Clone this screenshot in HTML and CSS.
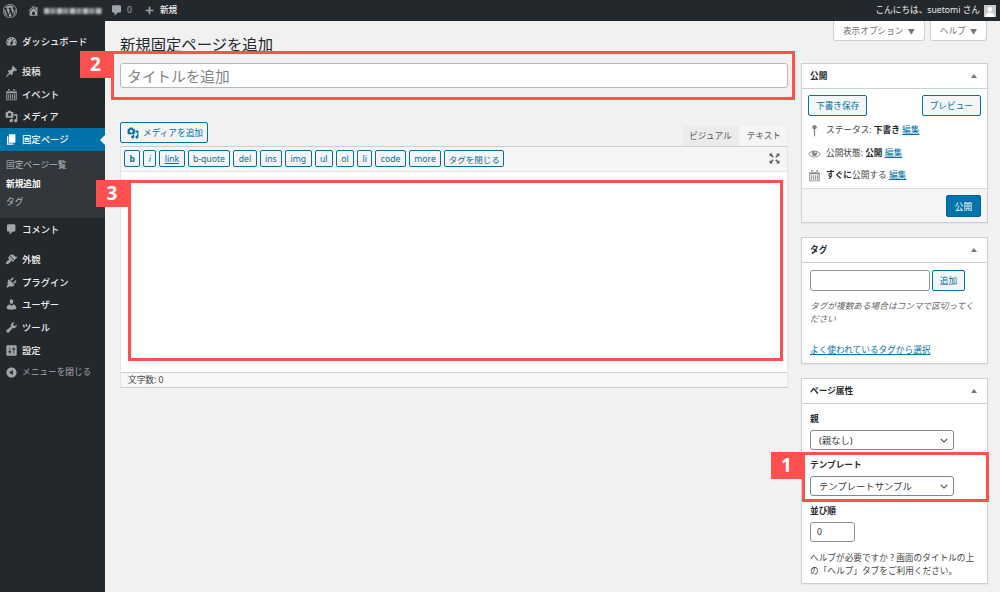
FILE: index.html
```html
<!DOCTYPE html>
<html lang="ja">
<head>
<meta charset="utf-8">
<title>新規固定ページを追加</title>
<link rel="stylesheet" href="styles.css">
</head>
<body>
<header class="topbar">
  <div class="tb-left">
    <svg class="tb-logo" viewBox="0 0 20 20"><path d="M20 10c0-5.52-4.48-10-10-10S0 4.48 0 10s4.48 10 10 10 10-4.48 10-10zM10 1.01c4.97 0 8.99 4.02 8.99 8.99s-4.02 8.99-8.99 8.99S1.01 14.97 1.01 10 5.03 1.01 10 1.01zM8.01 14.82L4.96 6.61c.49-.03 1.05-.08 1.05-.08.43-.05.38-1.01-.06-.99 0 0-1.29.1-2.13.1-.15 0-.33 0-.52-.01 1.44-2.17 3.9-3.6 6.7-3.6 2.09 0 3.99.79 5.41 2.09-.6-.08-1.45.35-1.45 1.42 0 .66.38 1.22.79 1.88.31.54.5 1.22.5 2.21 0 1.34-1.27 4.48-1.27 4.48l-2.71-7.5c.48-.03.75-.16.75-.16.43-.05.38-1.1-.05-1.08 0 0-1.3.11-2.14.11-.78 0-2.11-.11-2.11-.11-.43-.02-.48 1.06-.05 1.08l.84.08 1.12 3.04zm6.02 2.15L16.64 10s.67-1.69.39-3.81c.63 1.14.94 2.42.94 3.81 0 2.96-1.56 5.58-3.94 6.97zM2.68 6.77L6.5 17.25c-2.67-1.3-4.47-4.08-4.47-7.25 0-1.16.2-2.23.65-3.23zm7.45 4.53l2.29 6.25c-.75.27-1.57.42-2.42.42-.72 0-1.41-.11-2.06-.3z"/></svg>
    <svg class="tb-home" viewBox="0 0 20 20"><path d="M16 8.5l1.53 1.53-1.06 1.06L10 4.62l-6.47 6.47-1.06-1.06L10 2.5l4 4v-2h2v4zm-6-2.46l6 5.99V18H4v-5.97zM12 17v-5H8v5h4z"/></svg>
    <span class="tb-blur"></span>
    <svg class="tb-comment" viewBox="0 0 20 20"><path d="M5 2h10c1.1 0 2 .9 2 2v7c0 1.1-.9 2-2 2h-3l-5 5v-5H5c-1.1 0-2-.9-2-2V4c0-1.1.9-2 2-2z"/></svg>
    <span class="tb-count">0</span>
    <svg class="tb-plus" viewBox="0 0 20 20"><path d="M17 8.5v3h-5.500V17h-3v-5.500H3v-3h5.500V3h3v5.500z"/></svg>
    <span class="tb-new">新規</span>
  </div>
  <div class="tb-right">
    <span>こんにちは、suetomi さん</span>
    <svg class="tb-avatar" viewBox="0 0 12 12"><rect width="12" height="12" fill="#c9c9c9"/><circle cx="6" cy="4.300" r="2.400" fill="#fff"/><path d="M1.500 12c0-3 2-4.500 4.500-4.500s4.500 1.500 4.500 4.500z" fill="#fff"/></svg>
  </div>
</header>

<div class="layout">
  <nav class="sidebar">
    <ul class="menu">
      <li class="item"><svg class="ico" viewBox="0 0 20 20"><path d="M3.76 16h12.480c1.100-1.370 1.760-3.110 1.760-5 0-4.420-3.580-8-8-8s-8 3.580-8 8c0 1.890.660 3.630 1.760 5zM10 4c.550 0 1 .450 1 1s-.450 1-1 1-1-.450-1-1 .450-1 1-1zM6 6c.550 0 1 .450 1 1s-.450 1-1 1-1-.450-1-1 .450-1 1-1zm8 0c.550 0 1 .450 1 1s-.450 1-1 1-1-.450-1-1 .450-1 1-1zm-5.370 5.550L12 7v6c0 1.100-.900 2-2 2s-2-.900-2-2c0-.570.240-1.080.630-1.450zM4 10c.550 0 1 .450 1 1s-.450 1-1 1-1-.450-1-1 .450-1 1-1zm12 0c.550 0 1 .450 1 1s-.450 1-1 1-1-.450-1-1 .450-1 1-1z"/></svg>ダッシュボード</li>
      <li class="item sep"><svg class="ico" viewBox="0 0 20 20"><path d="M10.440 3.020l1.820-1.820 6.360 6.350-1.830 1.820c-1.050-.680-2.480-.570-3.410.360l-.750.750c-.920.930-1.040 2.350-.350 3.410l-1.830 1.820-2.410-2.410-2.800 2.790c-.420.420-3.380 2.710-3.800 2.290s1.860-3.390 2.280-3.810l2.790-2.790L4.100 9.360l1.830-1.820c1.050.690 2.480.570 3.400-.360l.750-.750c.930-.920 1.050-2.350.360-3.410z"/></svg>投稿</li>
      <li class="item"><svg class="ico" viewBox="0 0 20 20"><path d="M2 5h16v14H2zM3.500 8v9.500h13V8zM5 9.500h1.500v7H5zm3 0h1.500v7H8zm3 0h1.500v7H11zm3 0h1.500v7H14zM5 1.500h2V6H5zm8 0h2V6h-2z" fill-rule="evenodd"/></svg>イベント</li>
      <li class="item"><svg class="ico" viewBox="0 0 20 20"><path d="M13 11V4c0-.550-.450-1-1-1h-1.670L9 1H5L3.670 3H2c-.550 0-1 .450-1 1v7c0 .550.450 1 1 1h10c.550 0 1-.450 1-1zM7 4.500c1.380 0 2.500 1.120 2.500 2.500S8.380 9.500 7 9.500 4.500 8.380 4.500 7 5.620 4.500 7 4.500zM14 6h5v10.500c0 1.380-1.120 2.500-2.500 2.500S14 17.880 14 16.500s1.120-2.500 2.500-2.500c.170 0 .340.020.500.050V9h-3V6zm-4 8.050V13h2v3.500c0 1.380-1.120 2.500-2.500 2.500S7 17.880 7 16.500 8.120 14 9.500 14c.170 0 .340.020.500.050z"/></svg>メディア</li>
      <li class="item active"><svg class="ico" viewBox="0 0 20 20"><path d="M6 15V2h10v13H6zm-1 1h8v2H3V5h2v11z"/></svg>固定ページ</li>
      <li class="submenu">
        <div class="sub-item">固定ページ一覧</div>
        <div class="sub-item current">新規追加</div>
        <div class="sub-item">タグ</div>
      </li>
      <li class="item"><svg class="ico" viewBox="0 0 20 20"><path d="M5 2h9c1.100 0 2 .900 2 2v7c0 1.100-.900 2-2 2h-2l-5 5v-5H5c-1.100 0-2-.900-2-2V4c0-1.100.900-2 2-2z"/></svg>コメント</li>
      <li class="item sep"><svg class="ico" viewBox="0 0 20 20"><path d="M14.480 11.060L7.410 3.990l1.500-1.500c.500-.560 2.300-.470 3.510.320 1.210.800 1.430 1.280 2.910 2.100 1.180.640 2.450 1.260 4.450.850zm-.710.710L6.700 4.700 4.930 6.470c-.390.390-.390 1.020 0 1.410l1.060 1.060c.390.390.390 1.030 0 1.420-.600.600-1.430 1.110-2.210 1.690-.350.260-.700.530-1.010.840C1.430 13.710.960 15.650 2.010 16.700c1.060 1.060 2.990.590 4.820-1.240.310-.310.590-.660.840-1.010.580-.780 1.090-1.610 1.690-2.210.390-.390 1.020-.390 1.410 0l1.060 1.060c.390.390 1.020.390 1.410 0z"/></svg>外観</li>
      <li class="item"><svg class="ico" viewBox="0 0 20 20"><path d="M13.110 4.360L9.870 7.600 8 5.730l3.240-3.240c.350-.340 1.050-.200 1.560.320.520.510.660 1.210.310 1.550zm-8 1.770l.910-1.120 9.010 9.010-1.190.840c-.710.710-2.630 1.160-3.820 1.160H6.140L4.900 17.260c-.590.590-1.540.590-2.120 0-.590-.580-.590-1.530 0-2.120l1.240-1.240v-3.880c0-1.130.400-3.190 1.090-3.890zm7.260 3.970l3.240-3.240c.340-.350 1.040-.210 1.550.31.520.510.660 1.210.310 1.550l-3.240 3.250z"/></svg>プラグイン</li>
      <li class="item"><svg class="ico" viewBox="0 0 20 20"><path d="M10 9.250c-2.270 0-2.730-3.440-2.730-3.440C7 4.020 7.820 2 9.970 2c2.160 0 2.980 2.020 2.710 3.810 0 0-.410 3.440-2.680 3.440zm0 2.570L12.720 10c2.390 0 4.520 2.330 4.520 4.530v2.490s-3.650 1.130-7.240 1.130c-3.650 0-7.240-1.130-7.240-1.130v-2.490c0-2.250 1.940-4.480 4.470-4.480z"/></svg>ユーザー</li>
      <li class="item"><svg class="ico" viewBox="0 0 20 20"><path d="M16.680 9.770c-1.340 1.340-3.300 1.670-4.950.990l-5.410 6.520c-.990.990-2.590.990-3.580 0s-.990-2.590 0-3.570l6.520-5.420c-.680-1.650-.350-3.610.990-4.950 1.280-1.280 3.120-1.620 4.720-1.060l-2.890 2.890 2.820 2.820 2.860-2.870c.530 1.580.180 3.390-1.080 4.650z"/></svg>ツール</li>
      <li class="item"><svg class="ico" viewBox="0 0 20 20"><path d="M18 16V4c0-1.100-.900-2-2-2H4c-1.100 0-2 .900-2 2v12c0 1.100.900 2 2 2h12c1.100 0 2-.900 2-2zM8 11h1c.550 0 1 .450 1 1s-.450 1-1 1H8v1.500c0 .280-.220.500-.500.500s-.500-.220-.500-.500V13H6c-.550 0-1-.450-1-1s.450-1 1-1h1V5.500c0-.280.220-.500.500-.500s.500.220.500.500V11zm5-2h-1c-.550 0-1-.450-1-1s.450-1 1-1h1V5.500c0-.280.220-.500.500-.500s.500.220.500.500V7h1c.550 0 1 .450 1 1s-.450 1-1 1h-1v5.500c0 .280-.220.500-.500.500s-.500-.220-.500-.500V9z"/></svg>設定</li>
      <li class="item collapse"><svg class="ico" viewBox="0 0 20 20"><path d="M10 2.160c4.330 0 7.840 3.510 7.840 7.840s-3.510 7.840-7.840 7.840S2.160 14.330 2.160 10 5.710 2.160 10 2.160zm2 11.720V6.120L6.180 9.970z"/></svg>メニューを閉じる</li>
    </ul>
  </nav>

  <main class="main">
    <div class="head">
      <h1 class="page-title">新規固定ページを追加</h1>
      <div class="meta-tabs">
        <button class="meta-tab">表示オプション <span class="tri">▼</span></button>
        <button class="meta-tab">ヘルプ <span class="tri">▼</span></button>
      </div>
    </div>

    <div class="columns">
      <section class="col-main">
        <input class="title-input" type="text" placeholder="タイトルを追加">

        <div class="editor-top">
          <button class="btn media-btn"><svg class="media-ico" viewBox="0 0 20 20"><path d="M13 11V4c0-.550-.450-1-1-1h-1.670L9 1H5L3.670 3H2c-.550 0-1 .450-1 1v7c0 .550.450 1 1 1h10c.550 0 1-.450 1-1zM7 4.500c1.380 0 2.500 1.120 2.500 2.500S8.380 9.500 7 9.500 4.500 8.380 4.500 7 5.620 4.500 7 4.500zM14 6h5v10.500c0 1.380-1.120 2.500-2.500 2.500S14 17.880 14 16.500s1.120-2.500 2.500-2.500c.170 0 .340.020.500.050V9h-3V6zm-4 8.050V13h2v3.500c0 1.380-1.120 2.500-2.500 2.500S7 17.880 7 16.500 8.120 14 9.500 14c.170 0 .340.020.500.050z"/></svg>メディアを追加</button>
          <div class="editor-tabs">
            <span class="etab">ビジュアル</span>
            <span class="etab on">テキスト</span>
          </div>
        </div>

        <div class="editor">
          <div class="qt-bar">
            <div class="qt-list">
              <button class="qt qt-b">b</button>
              <button class="qt qt-i">i</button>
              <button class="qt qt-u">link</button>
              <button class="qt">b-quote</button>
              <button class="qt">del</button>
              <button class="qt">ins</button>
              <button class="qt">img</button>
              <button class="qt">ul</button>
              <button class="qt">ol</button>
              <button class="qt">li</button>
              <button class="qt">code</button>
              <button class="qt">more</button>
              <button class="qt qt-close">タグを閉じる</button>
            </div>
            <svg class="fs-ico" viewBox="0 0 20 20"><path d="M1 1h6L5 3l3.500 3.500-2 2L3 5 1 7zM19 1v6l-2-2-3.500 3.500-2-2L15 3l-2-2zM1 19v-6l2 2 3.500-3.500 2 2L5 17l2 2zM19 19h-6l2-2-3.500-3.500 2-2L17 15l2-2z"/></svg>
          </div>
          <div class="editor-area"></div>
          <div class="editor-status">文字数: 0</div>
        </div>
      </section>

      <aside class="col-side">
        <section class="box">
          <h2 class="box-head">公開<span class="tri-up"></span></h2>
          <div class="pub-actions">
            <button class="btn">下書き保存</button>
            <button class="btn">プレビュー</button>
          </div>
          <div class="pub-rows">
            <div class="pub-row"><svg class="pub-ico" viewBox="0 0 20 20"><path d="M10 1.500c-2.200 0-3.500 1.500-3.500 3.400 0 1.500.900 2.700 2.500 3.100V18l1 1.500 1-1.500V8c1.600-.400 2.500-1.600 2.500-3.100 0-1.900-1.300-3.400-3.500-3.400z"/></svg><span>ステータス: <b>下書き</b> <a href="#">編集</a></span></div>
            <div class="pub-row"><svg class="pub-ico" viewBox="0 0 20 20"><path d="M18.300 9.500C15 4.900 8.500 3.800 3.900 7.200c-1.200.900-2.200 2.100-3 3.400.200.400.500.800.800 1.200 3.300 4.600 9.600 5.600 14.200 2.400.900-.700 1.700-1.400 2.400-2.400.300-.400.500-.800.800-1.200-.300-.400-.500-.800-.800-1.100zm-8.200-2.300c.500-.500 1.300-.500 1.800 0s.500 1.300 0 1.800-1.300.500-1.800 0-.500-1.300 0-1.800zm-.100 7.700c-3.100 0-6-1.600-7.700-4.200C3.500 9 5.100 7.800 7 7.200c-.700.800-1 1.700-1 2.700 0 2.200 1.700 4.100 4 4.100 2.200 0 4.100-1.700 4.100-4v-.100c0-1-.400-2-1.100-2.700 1.900.600 3.500 1.800 4.700 3.500-1.700 2.600-4.600 4.200-7.700 4.200z"/></svg><span>公開状態: <b>公開</b> <a href="#">編集</a></span></div>
            <div class="pub-row"><svg class="pub-ico" viewBox="0 0 20 20"><path d="M2 5h16v14H2zM3.500 8v9.500h13V8zM5 9.500h1.500v7H5zm3 0h1.500v7H8zm3 0h1.500v7H11zm3 0h1.500v7H14zM5 1.500h2V6H5zm8 0h2V6h-2z" fill-rule="evenodd"/></svg><span><b>すぐに</b>公開する <a href="#">編集</a></span></div>
          </div>
          <div class="pub-foot"><button class="btn-primary">公開</button></div>
        </section>

        <section class="box">
          <h2 class="box-head">タグ<span class="tri-up"></span></h2>
          <div class="tag-body">
            <div class="tag-add">
              <input class="tag-input" type="text">
              <button class="btn tag-btn">追加</button>
            </div>
            <p class="tag-help">タグが複数ある場合はコンマで区切ってください</p>
            <a class="tag-link" href="#">よく使われているタグから選択</a>
          </div>
        </section>

        <section class="box">
          <h2 class="box-head">ページ属性<span class="tri-up"></span></h2>
          <div class="attr-body">
            <label class="attr-label">親</label>
            <select class="attr-select"><option>(親なし)</option></select>
            <label class="attr-label">テンプレート</label>
            <select class="attr-select"><option>テンプレートサンプル</option></select>
            <label class="attr-label">並び順</label>
            <input class="order-input" type="text" value="0">
            <p class="attr-help">ヘルプが必要ですか ? 画面のタイトルの上の「ヘルプ」タブをご利用ください。</p>
          </div>
        </section>
      </aside>
    </div>
  </main>
</div>

<div class="mark mark-2"></div><div class="badge badge-2">2</div>
<div class="mark mark-3"></div><div class="badge badge-3">3</div>
<div class="mark mark-1"></div><div class="badge badge-1">1</div>
</body>
</html>
```

FILE: styles.css
```css
* { box-sizing: border-box; }
html, body { margin: 0; padding: 0; }
body {
  position: relative;
  width: 1000px;
  height: 592px;
  overflow: hidden;
  background: #f1f1f1;
  color: #444;
  font-family: "Noto Sans", "Noto Sans CJK JP", sans-serif;
  font-size: 8.67px;
  line-height: 13px;
}
button, input, select { font-family: inherit; font-size: 8.67px; margin: 0; }
ul { list-style: none; margin: 0; padding: 0; }
a { color: #0073aa; }
h1, h2, p { margin: 0; }

/* top bar */
.topbar {
  height: 21px;
  background: #23282d;
  color: #eee;
  display: flex;
  justify-content: space-between;
  align-items: center;
  padding: 0 4px 0 3px;
}
.tb-left, .tb-right { display: flex; align-items: center; }
.topbar svg { fill: #a0a5aa; display: block; }
.tb-logo { width: 14px; height: 14px; margin-right: 10px; }
.tb-home { width: 13px; height: 13px; margin-right: 4px; }
.tb-blur {
  width: 58px;
  height: 6px;
  margin-right: 8px;
  filter: blur(1.200px);
  background: repeating-linear-gradient(90deg, #b9bcbf 0 5px, #6c7074 5px 7px, #94989b 7px 11px, #50555a 11px 13px);
}
.tb-comment { width: 13px; height: 13px; margin-right: 4px; }
.tb-count { color: #a0a5aa; margin-right: 12px; }
.tb-plus { width: 11px; height: 11px; margin-right: 5px; }
.tb-new { font-weight: 500; }
.tb-right { gap: 4px; }
.tb-avatar { width: 12px; height: 12px; }

/* layout */
.layout { display: flex; height: 571px; }
.sidebar { width: 105px; flex: none; background: #23282d; padding-top: 9px; }
.item {
  position: relative;
  height: 22.700px;
  display: flex;
  align-items: center;
  padding-left: 5px;
  gap: 4px;
  color: #eee;
  font-size: 9.330px;
  font-weight: 500;
}
.ico { width: 13px; height: 13px; fill: #a0a5aa; flex: none; }
.sep { margin-top: 7.500px; }
.active { background: #0073aa; color: #fff; }
.active .ico { fill: #fff; }
.active::after {
  content: "";
  position: absolute;
  right: 0;
  top: 50%;
  margin-top: -5px;
  border: 5px solid transparent;
  border-right-color: #f1f1f1;
  border-left-width: 0;
}
.submenu { background: #32373c; padding: 5.500px 0 6px; }
.sub-item { height: 18.500px; display: flex; align-items: center; padding-left: 6px; color: #b4b9be; font-size: 8.670px; }
.sub-item.current { color: #fff; font-weight: 700; }
.collapse { color: #a0a5aa; font-size: 8.670px; font-weight: 400; }

/* main */
.main { flex: 1; padding: 0 12px 0 15px; min-width: 0; }
.head { height: 42px; display: flex; justify-content: space-between; }
.page-title { font-size: 15.330px; font-weight: 400; color: #23282d; line-height: 20px; padding-top: 13px; }
.meta-tabs { display: flex; gap: 5px; align-items: flex-start; margin-right: 1px; }
.meta-tab {
  height: 20px;
  padding: 0 9px;
  background: #fff;
  border: 1px solid #ccd0d4;
  border-top: 0;
  border-radius: 0 0 3px 3px;
  color: #72777c;
  white-space: nowrap;
}
.tri { font-size: 7px; margin-left: 2px; }

.columns { display: flex; justify-content: space-between; }
.col-main { width: 668px; }
.col-side { width: 187px; }

.title-input {
  display: block;
  width: 100%;
  height: 25px;
  padding: 0 6px;
  font-size: 14.670px;
  border: 1px solid #b4b9be;
  border-radius: 3px;
  background: #fff;
  outline: 0;
}
.title-input::placeholder { color: #7e8388; opacity: 1; }

.btn {
  height: 21px;
  padding: 0 7px;
  border: 1px solid #0071a1;
  border-radius: 2px;
  background: #f3f5f6;
  color: #0071a1;
  white-space: nowrap;
}
.editor-top { margin-top: 34px; height: 24px; display: flex; justify-content: space-between; align-items: flex-start; }
.media-btn { display: flex; align-items: center; gap: 4px; padding: 0 4px 0 6px; }
.media-ico { width: 12px; height: 12px; fill: #0071a1; }
.editor-tabs { display: flex; align-items: flex-end; height: 24px; gap: 3px; padding-right: 1px; }
.etab {
  height: 20px;
  display: flex;
  align-items: center;
  padding: 0 6px;
  background: #ebebeb;
  color: #555;
  white-space: nowrap;
}
.etab.on { background: #f5f5f5; height: 20px; }

.editor { border: 1px solid #ccd0d4; border-left-color: #e2e4e7; border-right-color: #e2e4e7; background: #fff; }
.qt-bar {
  height: 24.500px;
  padding: 3px 7px 0 3px;
  background: #f5f5f5;
  border-bottom: 1px solid #e2e4e7;
  display: flex;
  justify-content: space-between;
}
.qt-list { display: flex; gap: 3px; }
.qt {
  height: 17px;
  padding: 0 4.400px;
  background: #f3f5f6;
  border: 1px solid #0071a1;
  border-radius: 2px;
  color: #0071a1;
  white-space: nowrap;
}
.qt-b { font-weight: 700; }
.qt-i { font-style: italic; }
.qt-u { text-decoration: underline; }
.qt-close { padding: 0 3.500px; font-size: 8.500px; }
.fs-ico { width: 11px; height: 11px; fill: #555d66; margin-top: 3px; }
.editor-area { height: 201px; background: #fff; border-bottom: 1px solid #ccd0d4; }
.editor-status { height: 14px; padding: 0 7px; line-height: 14px; background: #f7f7f7; color: #444; }

/* side */
.box {
  background: #fff;
  border: 1px solid #ccd0d4;
  margin-bottom: 14px;
  box-shadow: 0 1px 1px rgba(0,0,0,.04);
}
.box-head {
  height: 25px;
  padding: 0 8px;
  display: flex;
  align-items: center;
  justify-content: space-between;
  font-size: 8.670px;
  font-weight: 700;
  color: #23282d;
  border-bottom: 1px solid #ccd0d4;
}
.tri-up { border: 3.500px solid transparent; border-top-width: 0; border-bottom: 4px solid #72777c; margin-right: 2px; }
.pub-actions { display: flex; justify-content: space-between; padding: 6px 6px 0; }
.pub-rows { padding: 3px 6px 0; height: 72px; }
.pub-row { height: 22.700px; display: flex; align-items: center; gap: 5px; color: #444; white-space: nowrap; }
.pub-row b { color: #23282d; }
.pub-ico { width: 13px; height: 13px; fill: #82878c; flex: none; }
.pub-foot {
  height: 34px;
  padding: 6px 6px 0;
  background: #f5f5f5;
  border-top: 1px solid #ddd;
  display: flex;
  justify-content: flex-end;
}
.btn-primary {
  width: 35px;
  height: 22px;
  padding: 0;
  border: 1px solid #006799;
  border-radius: 2px;
  background: #0073aa;
  color: #fff;
}
.tag-body { height: 100px; padding: 7px 8px; }
.tag-add { display: flex; gap: 2px; }
.tag-input { width: 120px; height: 21px; border: 1px solid #8d9296; border-radius: 3px; background: #fff; }
.tag-btn { width: 33px; padding: 0; }
.tag-help { margin-top: 9px; font-style: italic; color: #666; }
.tag-link { display: block; margin-top: 18px; }
.attr-body { padding: 9px 8px 0; height: 179px; }
.attr-label { display: block; font-weight: 700; color: #23282d; height: 13px; margin-bottom: 4px; }
.attr-select {
  display: block;
  width: 144px;
  height: 20px;
  margin-bottom: 9px;
  padding: 0 8px;
  font-size: 9.330px;
  border: 1px solid #7e8993;
  border-radius: 3px;
  color: #32373c;
  appearance: none;
  -webkit-appearance: none;
  background: #fff url("data:image/svg+xml,%3Csvg xmlns='http://www.w3.org/2000/svg' viewBox='0 0 10 6'%3E%3Cpath d='M1 1l4 4 4-4' fill='none' stroke='%23444' stroke-width='1.300'/%3E%3C/svg%3E") no-repeat right 5px center / 8px 5px;
}
.order-input { display: block; width: 45px; height: 20px; padding: 0 6px; border: 1px solid #8d9296; border-radius: 3px; color: #32373c; background: #fff; }
.attr-help { margin-top: 10px; color: #444; }

/* annotations */
.mark { position: absolute; border: 3px solid #ff5050; pointer-events: none; }
.mark-2 { left: 111px; top: 51px; width: 684px; height: 49px; }
.mark-3 { left: 128px; top: 180px; width: 655px; height: 181px; }
.mark-1 { left: 802px; top: 452px; width: 187px; height: 50px; }
.badge {
  position: absolute;
  height: 27px;
  background: #ff5050;
  color: #fff;
  font-family: "Noto Sans", sans-serif;
  font-size: 19px;
  font-weight: 700;
  line-height: 27px;
  text-align: center;
}
.badge-2 { left: 80px; top: 51px; width: 31px; }
.badge-3 { left: 96px; top: 180px; width: 32px; }
.badge-1 { left: 771px; top: 452px; width: 31px; }
```
